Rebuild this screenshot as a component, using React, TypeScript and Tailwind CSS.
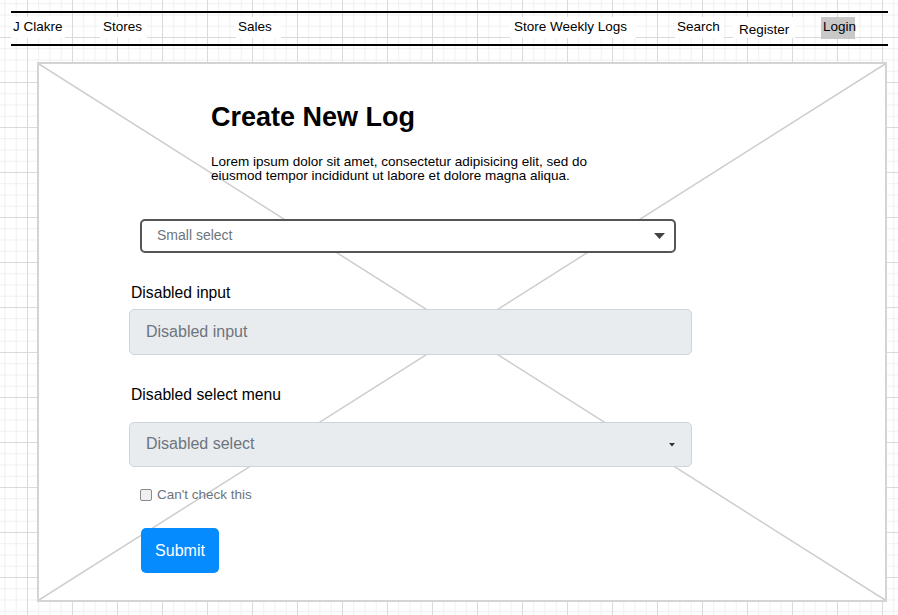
import React from "react";

const navItems = [
  { label: "J Clakre", cls: "w-[54px] pl-[2px]" },
  { label: "Stores", cls: "ml-[35px] w-[47px] pl-[3px]" },
  { label: "Sales", cls: "ml-[89px] w-[45px] pl-[2px]" },
  { label: "Store Weekly Logs", cls: "ml-[229px] w-[126px] pl-[4px]" },
  { label: "Search", cls: "ml-[39px] w-[49px] pl-[2px]" },
  { label: "Register", cls: "ml-[9px] w-[62px] pl-[6px] pt-[3px]" },
];

function Caret({ small }: { small?: boolean }) {
  if (small) {
    return (
      <svg width="6" height="4" viewBox="0 0 6 4" className="mr-[16px]">
        <polygon points="0,0 6,0 3,3.5" fill="#333" />
      </svg>
    );
  }
  return (
    <svg width="11" height="6" viewBox="0 0 11 6" className="mr-[9px]">
      <polygon points="0,0 11,0 5.5,6" fill="#444" />
    </svg>
  );
}

export default function App() {
  return (
    <div className="w-[898px] h-[615px] overflow-hidden bg-white bg-[linear-gradient(to_right,#dadada_1px,transparent_1px),linear-gradient(to_bottom,#dadada_1px,transparent_1px),linear-gradient(to_right,#efefef_1px,transparent_1px),linear-gradient(to_bottom,#efefef_1px,transparent_1px)] bg-[size:45px_45px,45px_45px,11.25px_11.25px,11.25px_11.25px] bg-[position:27px_37px] font-['Liberation_Sans',Arial,sans-serif] pt-[11px]">
      {/* ナビゲーション */}
      <nav className="ml-[11px] w-[877px] h-[35px] border-y-2 border-black flex items-start pt-[4px] text-[13.5px] text-black">
        {navItems.map((item) => (
          <span key={item.label} className={`bg-white h-[21px] leading-[20px] whitespace-nowrap ${item.cls}`}>
            {item.label}
          </span>
        ))}
        <span className="ml-[26px] w-[34px] h-[22px] pl-[2px] leading-[20px] bg-[#c8c8c8]">Login</span>
      </nav>

      {/* メインパネル */}
      <main className="relative mt-[16px] ml-[37px] w-[850px] h-[540px] border-2 border-[#d4d4d4] bg-white">
        <svg className="absolute inset-0 w-full h-full" preserveAspectRatio="none">
          <line x1="0" y1="0" x2="100%" y2="100%" stroke="#cdcdcd" strokeWidth="1.5" />
          <line x1="100%" y1="0" x2="0" y2="100%" stroke="#cdcdcd" strokeWidth="1.5" />
        </svg>

        <div className="relative flex flex-col items-start pl-[90px]">
          <h1 className="ml-[82px] mt-[37px] text-[27px] leading-[32px] font-bold text-black">Create New Log</h1>
          <p className="ml-[82px] mt-[22px] w-[400px] text-[13.5px] leading-[14px] text-black">
            Lorem ipsum dolor sit amet, consectetur adipisicing elit, sed do eiusmod tempor incididunt ut labore et dolore
            magna aliqua.
          </p>

          <div className="ml-[11px] mt-[36px] w-[536px] h-[34px] border-2 border-[#555] rounded-[5px] bg-white flex items-center justify-between pl-[15px]">
            <span className="text-[14px] text-[#6c757d] -mt-[2px]">Small select</span>
            <Caret />
          </div>

          <label className="ml-[2px] mt-[30px] text-[15.7px] leading-[20px] text-black">Disabled input</label>
          <div className="mt-[6px] w-[563px] h-[46px] border border-[#ced4da] rounded-[5px] bg-[#e9ecef] flex items-center pl-[16px]">
            <span className="text-[16px] text-[#6c757d] -mt-[1px]">Disabled input</span>
          </div>

          <label className="ml-[2px] mt-[30px] text-[15.7px] leading-[20px] text-black">Disabled select menu</label>
          <div className="mt-[17px] w-[563px] h-[45px] border border-[#ced4da] rounded-[5px] bg-[#e9ecef] flex items-center justify-between pl-[16px]">
            <span className="text-[16px] text-[#6c757d] -mt-[2px]">Disabled select</span>
            <Caret small />
          </div>

          <div className="mt-[21px] ml-[11px] flex items-center h-[14px]">
            <span className="w-[12px] h-[12px] rounded-[2px] border border-[#8a8a8a] bg-[#f0f0f0]" />
            <span className="ml-[5px] text-[13.5px] leading-[14px] text-[#6c757d]">Can't check this</span>
          </div>

          <button className="mt-[26px] ml-[12px] w-[78px] h-[45px] rounded-[5px] bg-[#068bff] text-white text-[16px]">
            Submit
          </button>
        </div>
      </main>
    </div>
  );
}
